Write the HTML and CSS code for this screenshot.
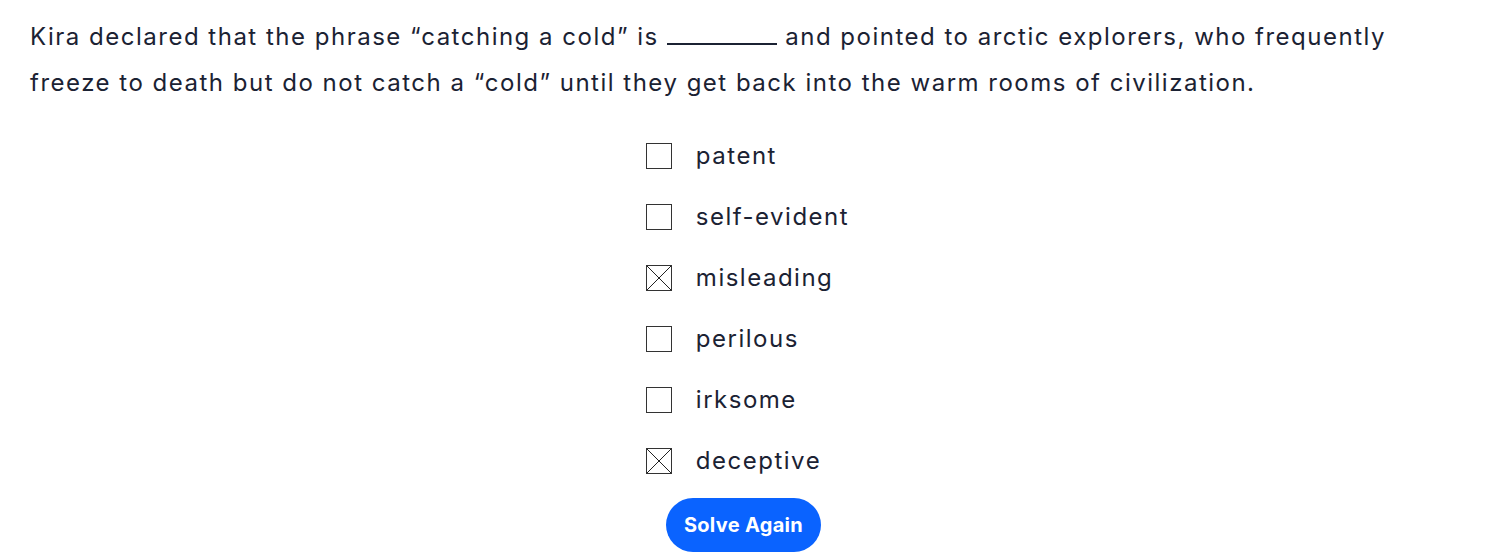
FILE: index.html
```html
<!DOCTYPE html>
<html>
<head>
<meta charset="utf-8">
<link rel="stylesheet" href="styles.css">
</head>
<body>
<div class="page">
  <p class="question">Kira declared that the phrase “catching a cold” is <span class="blank"></span> and pointed to arctic explorers, who frequently freeze to death but do not catch a “cold” until they get back into the warm rooms of civilization.</p>
  <div class="options">
    <ul class="choices">
      <li class="choice"><span class="box"></span><span class="label">patent</span></li>
      <li class="choice"><span class="box"></span><span class="label">self-evident</span></li>
      <li class="choice"><span class="box checked"><svg viewBox="0 0 26 26" width="26" height="26"><path d="M1 1L25 25M25 1L1 25" stroke="#222" stroke-width="1"/></svg></span><span class="label">misleading</span></li>
      <li class="choice"><span class="box"></span><span class="label">perilous</span></li>
      <li class="choice"><span class="box"></span><span class="label">irksome</span></li>
      <li class="choice"><span class="box checked"><svg viewBox="0 0 26 26" width="26" height="26"><path d="M1 1L25 25M25 1L1 25" stroke="#222" stroke-width="1"/></svg></span><span class="label">deceptive</span></li>
    </ul>
    <button class="solve">Solve Again</button>
  </div>
</div>
</body>
</html>
```
FILE: styles.css
```css
html, body { margin: 0; padding: 0; background: #fff; }
body { font-family: Inter, "Noto Sans", sans-serif; color: #1b2233; }
.page { padding: 14px 30px 0 30px; }
.question { margin: 0; font-size: 24px; line-height: 46px; letter-spacing: 1.5px; max-width: 1385px; }
.blank { display: inline-block; width: 110px; border-bottom: 2px solid #1b2233; vertical-align: 0; }
.options { display: flex; flex-direction: column; align-items: center; margin-top: 37px; }
.choices { list-style: none; margin: 0; padding: 0; display: flex; flex-direction: column; gap: 35px; }
.choice { display: flex; align-items: center; height: 26px; font-size: 24px; letter-spacing: 1.5px; }
.box { width: 26px; height: 26px; box-sizing: border-box; border: 1px solid #333; display: inline-block; margin-right: 24px; flex: none; position: relative; }
.box svg { position: absolute; left: -1px; top: -1px; }
.label { line-height: 26px; }
.solve { margin-top: 24px; margin-left: -8px; background: #0a63ff; color: #fff; border: none; border-radius: 28px; width: 155px; height: 54px; font-family: Inter, sans-serif; font-weight: 700; font-size: 20px; letter-spacing: 0.3px; }
```
